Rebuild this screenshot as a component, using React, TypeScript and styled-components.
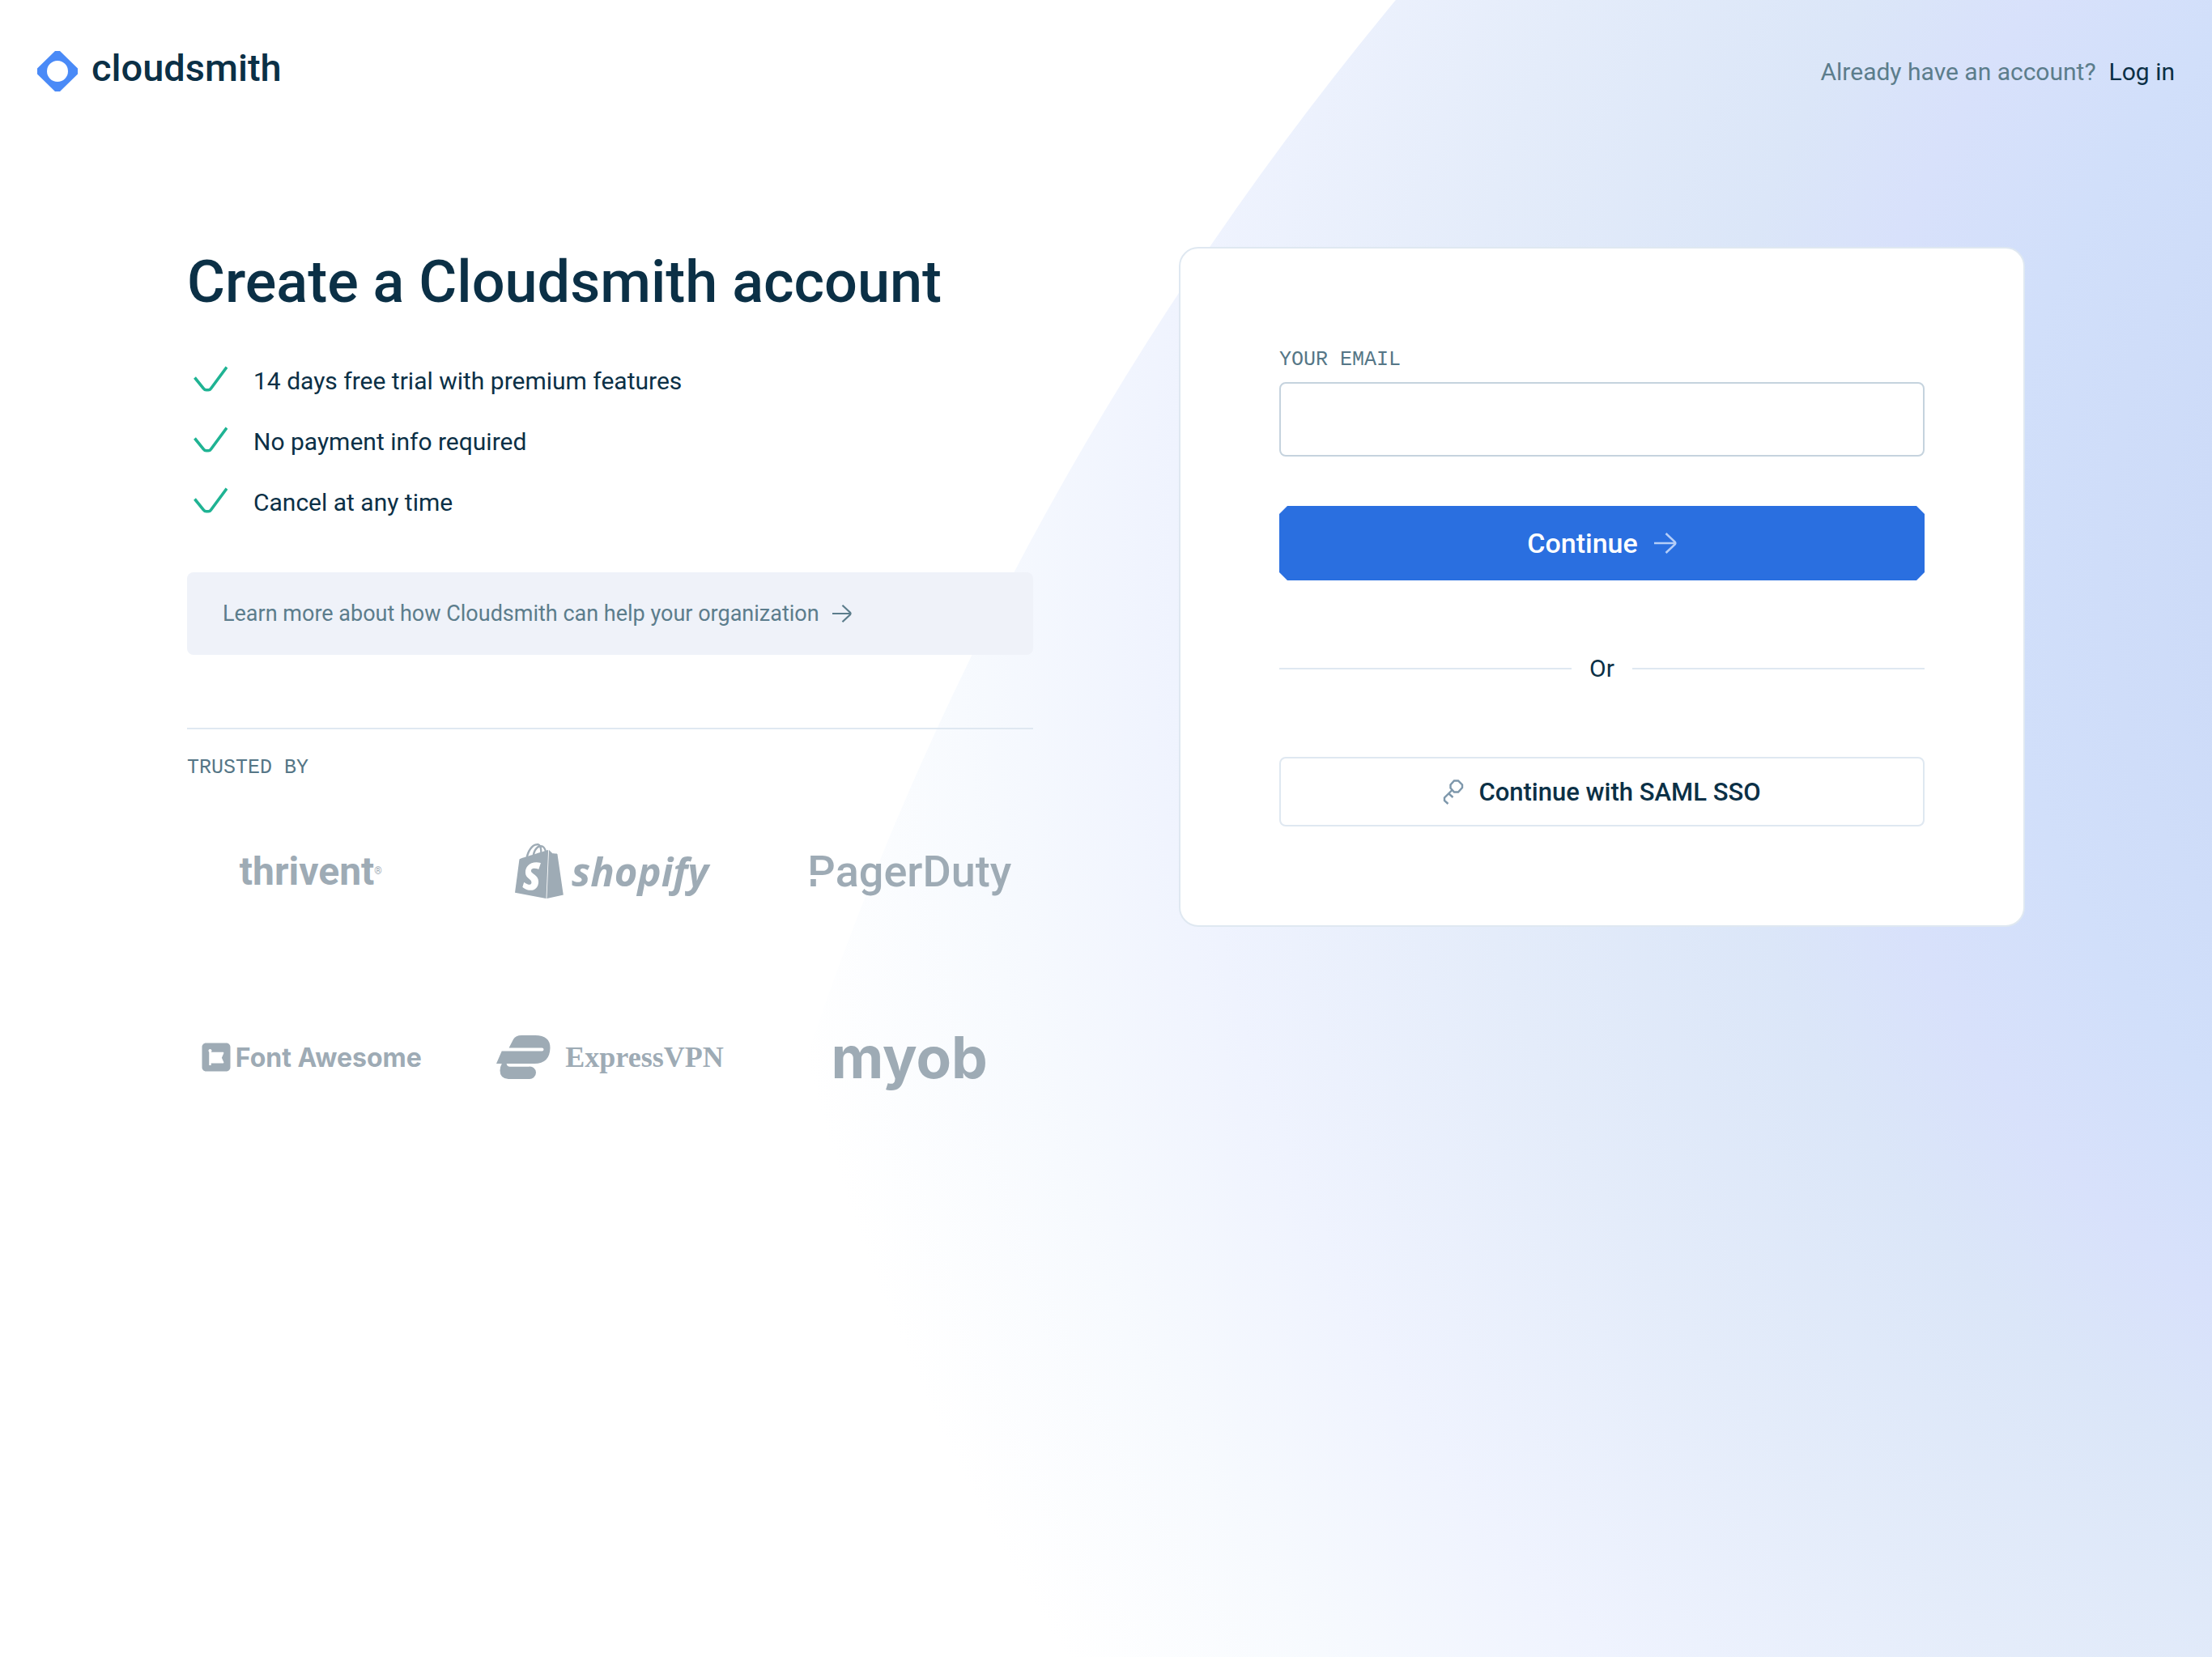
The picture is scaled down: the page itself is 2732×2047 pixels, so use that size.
import React from "react";
import styled, { createGlobalStyle } from "styled-components";
import { SiShopify } from "react-icons/si";
import { FaSquareFontAwesome } from "react-icons/fa6";

const color = {
  ink: "#0b3046",
  muted: "#5c7d8c",
  label: "#557686",
  line: "#dfe8f1",
  field: "#c5d3de",
  brand: "#4a8af7",
  primary: "#2a6fe0",
  check: "#1fb393",
  logo: "#9eabb5",
  panel: "#eff2f9",
};

const sans = `Roboto, "Liberation Sans", sans-serif`;
const mono = `"Liberation Mono", monospace`;

const GlobalStyle = createGlobalStyle`
  *, *::before, *::after { box-sizing: border-box; }
  body {
    margin: 0;
    background: #fff;
    color: ${color.ink};
    font-family: ${sans};
    font-size: 30px;
  }
`;

const Page = styled.div`
  position: relative;
  min-height: 100vh;
  overflow: hidden;
`;

const Backdrop = styled.div`
  position: absolute;
  inset: 0;
  clip-path: circle(4080px at calc(100% + 2132px) 2605px);
  background: radial-gradient(
    circle at calc(100% + 668px) 700px,
    #cddbf8 670px,
    #d1dffa 930px,
    #d8e1fb 1130px,
    #dbe6f8 1300px,
    #e4ecfa 1620px,
    #eff3fe 1950px,
    #f7fafe 2220px,
    #ffffff 2480px
  );
`;

const Header = styled.header`
  position: relative;
  display: flex;
  align-items: center;
  justify-content: space-between;
  min-height: 176px;
  padding: 0 46px;
`;

const Brand = styled.a`
  display: flex;
  align-items: flex-start;
  gap: 17px;
  color: ${color.ink};
  font-size: 47px;
  font-weight: 500;
  line-height: 42px;
  text-decoration: none;
`;

const LoginPrompt = styled.p`
  display: flex;
  gap: 16px;
  margin: 0;
  color: ${color.muted};
`;

const LoginLink = styled.a`
  color: ${color.ink};
  text-decoration: none;
`;

const Main = styled.main`
  position: relative;
  display: grid;
  grid-template-columns: 1fr 1fr;
  gap: 180px;
  align-items: start;
  width: calc(100% - 92px);
  max-width: 2270px;
  margin: 0 auto;
  padding: 129px 0 96px;
`;

const Title = styled.h1`
  margin: 0 0 56px;
  font-size: 72px;
  font-weight: 500;
  line-height: 88px;
`;

const Benefits = styled.ul`
  display: grid;
  gap: 32px;
  margin: 0 0 65px;
  padding: 0;
  list-style: none;
`;

const Benefit = styled.li`
  display: flex;
  align-items: center;
  gap: 32px;
  padding-left: 8px;
  line-height: 43px;
`;

const LearnMore = styled.a`
  display: flex;
  align-items: center;
  gap: 16px;
  padding: 30px 44px;
  border-radius: 8px;
  background: ${color.panel};
  color: ${color.muted};
  font-size: 27px;
  line-height: 42px;
  text-decoration: none;
`;

const Trusted = styled.section`
  margin-top: 90px;
  padding-top: 32px;
  border-top: 2px solid ${color.line};
`;

const TrustedTitle = styled.h2`
  margin: 0 0 11px;
  color: ${color.label};
  font-family: ${mono};
  font-size: 25px;
  font-weight: 400;
  line-height: 32px;
  text-transform: uppercase;
`;

const LogoGrid = styled.div`
  display: grid;
  grid-template-columns: repeat(3, 1fr);
  grid-auto-rows: 200px;
  gap: 30px 64px;
`;

const Logo = styled.div<{ $font: string; $size: number; $weight: number; $italic?: boolean; $gap?: number }>`
  display: flex;
  align-items: center;
  justify-content: center;
  gap: ${(p) => p.$gap ?? 0}px;
  color: ${color.logo};
  font-family: ${(p) => p.$font};
  font-size: ${(p) => p.$size}px;
  font-style: ${(p) => (p.$italic ? "italic" : "normal")};
  font-weight: ${(p) => p.$weight};
  white-space: nowrap;
`;

const Registered = styled.sup`
  align-self: center;
  font-size: 12px;
  font-weight: 400;
  line-height: 28px;
`;

const SplitLetter = styled.span`
  mask-image: linear-gradient(#000 57%, transparent 57%, transparent 65%, #000 65%);
`;

const Card = styled.section`
  padding: 122px;
  border: 2px solid ${color.line};
  border-radius: 24px;
  background: #fff;
`;

const Form = styled.form`
  display: flex;
  flex-direction: column;
`;

const FieldLabel = styled.label`
  margin-bottom: 11px;
  color: ${color.label};
  font-family: ${mono};
  font-size: 25px;
  line-height: 32px;
  text-transform: uppercase;
`;

const Field = styled.input`
  width: 100%;
  height: 92px;
  margin-bottom: 61px;
  padding: 0 24px;
  border: 2px solid ${color.field};
  border-radius: 8px;
  background: #fff;
  color: ${color.ink};
  font: inherit;
`;

const PrimaryButton = styled.button`
  display: flex;
  align-items: center;
  justify-content: center;
  gap: 20px;
  height: 92px;
  border: 0;
  background: ${color.primary};
  clip-path: polygon(10px 0, calc(100% - 10px) 0, 100% 10px, 100% calc(100% - 10px), calc(100% - 10px) 100%, 10px 100%, 0 calc(100% - 10px), 0 10px);
  color: #fff;
  font-family: ${sans};
  font-size: 34px;
  font-weight: 500;
`;

const Divider = styled.div`
  display: flex;
  align-items: center;
  gap: 22px;
  margin: 87px 0;
  line-height: 44px;

  &::before,
  &::after {
    content: "";
    flex: 1;
    height: 2px;
    background: ${color.line};
  }
`;

const SecondaryButton = styled.button`
  display: flex;
  align-items: center;
  justify-content: center;
  gap: 18px;
  width: 100%;
  height: 86px;
  border: 2px solid ${color.line};
  border-radius: 8px;
  background: #fff;
  color: ${color.ink};
  font-family: ${sans};
  font-size: 31px;
  font-weight: 500;
`;

const BrandMark = () => (
  <svg width="50" height="50" viewBox="0 0 50 50" aria-hidden="true">
    <path
      fill={color.brand}
      fillRule="evenodd"
      d="M22 0h6L50 21.500v7L28 50h-6L0 28.500v-7zM25 12a13 13 0 1 0 0 26 13 13 0 0 0 0-26z"
    />
  </svg>
);

const Check = () => (
  <svg width="42" height="38" viewBox="0 0 42 38" fill="none" stroke={color.check} strokeWidth="3.600" aria-hidden="true">
    <path d="M1.500 14.500 12.500 28q1.200 1.800 3.200 1.800h2.600q2 0 3.200-1.800L41 1.500" />
  </svg>
);

const Arrow = ({ size, stroke }: { size: number; stroke: string }) => (
  <svg width={size} height={size} viewBox="0 0 28 28" fill="none" stroke={stroke} strokeWidth="2.600" aria-hidden="true">
    <path d="M0 14h26.500M14.500 2 25.500 12.300q1.500 1.700 0 3.400L14.500 26" />
  </svg>
);

const Key = () => (
  <svg width="26" height="32" viewBox="0 0 26 32" fill="none" stroke="#7d97ab" strokeWidth="2.400" aria-hidden="true">
    <path d="M14 2.500h5l5 5v3.500l-5 5.500h-5l-4.500-5V7.500zM11 14.500 2 23.500v3.500l4.500 4M7.500 18.500l5 4.500" />
  </svg>
);

const ExpressMark = () => (
  <svg width="67" height="55" viewBox="0 0 67 55" fill={color.logo} aria-hidden="true">
    <path d="M15.600 15.400 21 5Q24 0 31 0H48Q66.500 0 66.500 15.500 66 35 47 35H0L6.700 19.400H56.500A2 2 0 0 0 56.500 15.400z" />
    <path d="M7 34.500H12.500Q13 38.700 17 38.700H40A7.500 7.500 0 0 1 49 46 8 8 0 0 1 40 54H15Q4.500 53.500 4.500 43.500 4.500 39 7 34.500z" />
  </svg>
);

const benefits = ["14 days free trial with premium features", "No payment info required", "Cancel at any time"];

export default function App() {
  return (
    <Page>
      <GlobalStyle />
      <Backdrop />
      <Header>
        <Brand href="#">
          <BrandMark />
          cloudsmith
        </Brand>
        <LoginPrompt>
          Already have an account? <LoginLink href="#login">Log in</LoginLink>
        </LoginPrompt>
      </Header>
      <Main>
        <div>
          <Title>Create a Cloudsmith account</Title>
          <Benefits>
            {benefits.map((text) => (
              <Benefit key={text}>
                <Check />
                {text}
              </Benefit>
            ))}
          </Benefits>
          <LearnMore href="#learn-more">
            Learn more about how Cloudsmith can help your organization
            <Arrow size={24} stroke={color.muted} />
          </LearnMore>
          <Trusted>
            <TrustedTitle>Trusted by</TrustedTitle>
            <LogoGrid>
              <Logo $font={sans} $size={48} $weight={700}>
                thrivent<Registered>®</Registered>
              </Logo>
              <Logo $font={`"Open Sans", sans-serif`} $size={49} $weight={700} $italic $gap={6}>
                <SiShopify size={68} />
                shopify
              </Logo>
              <Logo $font={sans} $size={54} $weight={500}>
                <SplitLetter>P</SplitLetter>agerDuty
              </Logo>
              <Logo $font="Inter, sans-serif" $size={32} $weight={700} $gap={4}>
                <FaSquareFontAwesome size={40} />
                Font Awesome
              </Logo>
              <Logo $font={`"Liberation Serif", serif`} $size={36} $weight={700} $gap={18}>
                <ExpressMark />
                ExpressVPN
              </Logo>
              <Logo $font="Inter, sans-serif" $size={71} $weight={700}>
                myob
              </Logo>
            </LogoGrid>
          </Trusted>
        </div>
        <Card>
          <Form onSubmit={(event) => event.preventDefault()}>
            <FieldLabel htmlFor="email">Your email</FieldLabel>
            <Field id="email" type="email" />
            <PrimaryButton type="submit">
              Continue
              <Arrow size={28} stroke="#b4cdf8" />
            </PrimaryButton>
          </Form>
          <Divider>Or</Divider>
          <SecondaryButton type="button">
            <Key />
            Continue with SAML SSO
          </SecondaryButton>
        </Card>
      </Main>
    </Page>
  );
}
